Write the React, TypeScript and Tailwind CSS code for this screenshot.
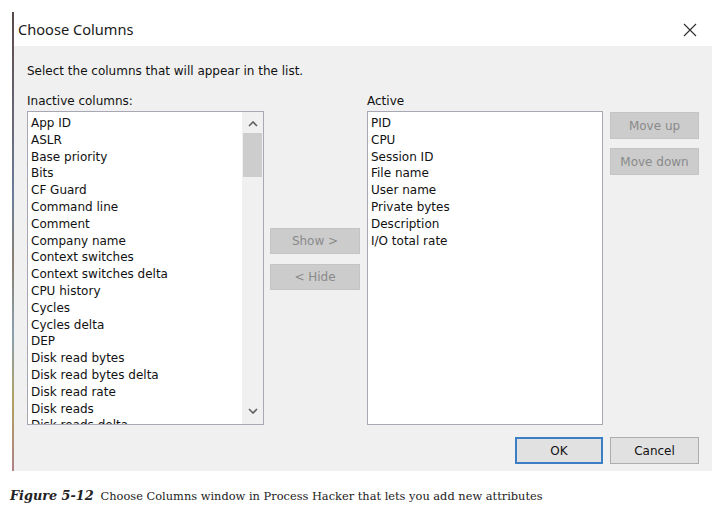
import React from 'react'

const inactive = [
  'App ID',
  'ASLR',
  'Base priority',
  'Bits',
  'CF Guard',
  'Command line',
  'Comment',
  'Company name',
  'Context switches',
  'Context switches delta',
  'CPU history',
  'Cycles',
  'Cycles delta',
  'DEP',
  'Disk read bytes',
  'Disk read bytes delta',
  'Disk read rate',
  'Disk reads',
  'Disk reads delta',
]

const active = ['PID', 'CPU', 'Session ID', 'File name', 'User name', 'Private bytes', 'Description', 'I/O total rate']

const ui = { fontFamily: '"DejaVu Sans", Verdana, sans-serif' }

function DisabledButton({ label, className = '' }: { label: string; className?: string }) {
  return (
    <div
      className={`flex items-center justify-center border border-[#c4c4c4] bg-[#cccccc] text-[12px] text-[#8a8a8a] ${className}`}
    >
      {label}
    </div>
  )
}

function ListItems({ items }: { items: string[] }) {
  return (
    <div className="flex flex-col pt-[3px] pl-[3px]">
      {items.map(item => (
        <div key={item} className="h-[16.8px] shrink-0 whitespace-nowrap text-[12px] leading-[16.8px] text-[#111]">
          {item}
        </div>
      ))}
    </div>
  )
}

export default function App() {
  return (
    <div className="relative h-[512px] w-[720px] overflow-hidden bg-white" style={ui}>
      {/* window */}
      <div className="ml-[14px] mt-[12px] flex h-[459px] w-[698px] flex-col">
        {/* title bar */}
        <div className="flex h-[34px] shrink-0 items-center justify-between bg-white pt-[2px]">
          <span
            className="pl-[4px] text-[14.6px] text-[#1a1a1a]"
            style={{ fontFamily: '"Noto Sans", "Open Sans", sans-serif' }}
          >
            Choose Columns
          </span>
          <svg width="14" height="14" viewBox="0 0 14 14" className="mr-[15px]">
            <path d="M1 1L13 13M13 1L1 13" stroke="#333" strokeWidth="1.2" fill="none" />
          </svg>
        </div>

        {/* client area */}
        <div className="flex flex-1 flex-col bg-[#f0f0f0] pl-[13px] pr-[13px]">
          <div className="mt-[16px] text-[12px] text-[#111]">Select the columns that will appear in the list.</div>

          <div className="mt-[15px] flex">
            {/* inactive */}
            <div className="flex w-[237px] flex-col">
              <div className="h-[16px] text-[12px] leading-[12px] text-[#111]">Inactive columns:</div>
              <div className="relative h-[314px] overflow-hidden border border-[#a8a8b4] bg-white">
                <ListItems items={inactive} />
                {/* scrollbar */}
                <div className="absolute right-0 top-0 flex h-full w-[21px] flex-col items-center bg-[#f0f0f0]">
                  <svg width="10" height="6" viewBox="0 0 10 6" className="mt-[9px]">
                    <path d="M1 5L5 1L9 5" stroke="#606060" strokeWidth="1.6" fill="none" />
                  </svg>
                  <div className="mt-[6px] h-[44px] w-[19px] bg-[#cdcdcd]" />
                  <div className="flex-1" />
                  <svg width="10" height="6" viewBox="0 0 10 6" className="mb-[10px]">
                    <path d="M1 1L5 5L9 1" stroke="#606060" strokeWidth="1.6" fill="none" />
                  </svg>
                </div>
              </div>
            </div>

            {/* show / hide */}
            <div className="ml-[6px] flex w-[90px] flex-col gap-[10px] pt-[133px]">
              <DisabledButton label="Show >" className="h-[26px]" />
              <DisabledButton label="< Hide" className="h-[26px]" />
            </div>

            {/* active */}
            <div className="ml-[7px] flex w-[236px] flex-col">
              <div className="h-[16px] text-[12px] leading-[12px] text-[#111]">Active</div>
              <div className="h-[314px] overflow-hidden border border-[#a8a8b4] bg-white">
                <ListItems items={active} />
              </div>
            </div>

            {/* move */}
            <div className="ml-[7px] flex w-[89px] flex-col gap-[9px] pt-[17px]">
              <DisabledButton label="Move up" className="h-[27px]" />
              <DisabledButton label="Move down" className="h-[27px]" />
            </div>
          </div>

          {/* ok / cancel */}
          <div className="mt-[12px] flex justify-end gap-[7px]">
            <div className="flex h-[27px] w-[88px] items-center justify-center border-2 border-[#3c7fc4] bg-[#e1e1e1] text-[12px] text-[#111]">
              OK
            </div>
            <div className="flex h-[27px] w-[89px] items-center justify-center border border-[#adadad] bg-[#e1e1e1] text-[12px] text-[#111]">
              Cancel
            </div>
          </div>
        </div>
      </div>

      {/* desktop sliver at left edge of window */}
      <div className="absolute left-[12px] top-[12px] h-[459px] w-[2px] bg-[linear-gradient(to_bottom,#5a4a48_0%,#6a6a7a_25%,#6b7c9a_40%,#8a8070_55%,#8aa0b0_70%,#b0a060_85%,#b08088_100%)]" />

      {/* caption */}
      <div
        className="absolute left-[10px] top-[486px] flex items-baseline whitespace-nowrap text-[#222]"
        style={{ fontFamily: '"DejaVu Serif", "Liberation Serif", serif' }}
      >
        <span className="text-[12.8px] font-bold italic">Figure 5-12</span>
        <span className="ml-[7px] text-[11.4px]">Choose Columns window in Process Hacker that lets you add new attributes</span>
      </div>
    </div>
  )
}
